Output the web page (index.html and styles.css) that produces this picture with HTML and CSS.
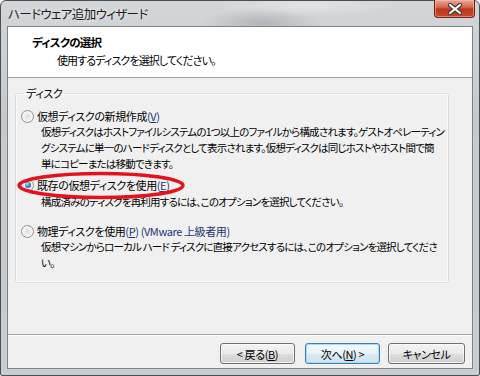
FILE: index.html
```html
<!DOCTYPE html>
<html lang="ja">
<head>
  <meta charset="UTF-8">
  <title>ハードウェア追加ウィザード</title>
  <link rel="stylesheet" href="styles.css">
</head>
<body>
  <div class="window">
    <div class="titlebar">
      <span class="title">ハードウェア追加ウィザード</span>
      <div class="close">
        <svg width="16" height="12" viewBox="0 0 16 12">
          <path d="M3 2 L13 10 M13 2 L3 10" stroke="#3a3a3a" stroke-width="4.2" stroke-linecap="round"/>
          <path d="M3 2 L13 10 M13 2 L3 10" stroke="#ffffff" stroke-width="2.2" stroke-linecap="round"/>
        </svg>
      </div>
    </div>

    <div class="client">
      <!-- ヘッダー -->
      <div class="header">
        <div class="head-title">ディスクの選択</div>
        <div class="head-sub">使用するディスクを選択してください。</div>
      </div>

      <div class="body">
        <fieldset class="group">
          <legend>ディスク</legend>

          <div class="option">
            <span class="radio"></span>
            <span>仮想ディスクの新規作成<span class="key">(<u>V</u>)</span></span>
          </div>
          <div class="desc">仮想ディスクはホストファイルシステムの1つ以上のファイルから構成されます。ゲストオペレーティン<br>グシステムに単一のハードディスクとして表示されます。仮想ディスクは同じホストやホスト間で簡<br>単にコピーまたは移動できます。</div>

          <div class="option second">
            <span class="radio checked"></span>
            <span>既存の仮想ディスクを使用<span class="key">(<u>E</u>)</span></span>
          </div>
          <div class="desc">構成済みのディスクを再利用するには、このオプションを選択してください。</div>

          <div class="option third">
            <span class="radio"></span>
            <span>物理ディスクを使用<span class="key">(<u>P</u>) (VMware 上級者用)</span></span>
          </div>
          <div class="desc">仮想マシンからローカル ハード ディスクに直接アクセスするには、このオプションを選択してくださ<br>い。</div>
        </fieldset>

        <svg class="mark" width="172" height="32" viewBox="0 0 172 32">
          <ellipse cx="86" cy="15.5" rx="82" ry="12" fill="none" stroke="#e3121c" stroke-width="3.4"/>
        </svg>
      </div>

      <div class="footer">
        <button class="btn">&lt; 戻る(<u>B</u>)</button>
        <button class="btn default">次へ(<u>N</u>) &gt;</button>
        <button class="btn cancel">キャンセル</button>
      </div>
    </div>
  </div>
</body>
</html>
```

FILE: styles.css
```css
body {
  margin: 0;
  background: #ffffff;
  font-family: "Noto Sans CJK JP", "Noto Sans", sans-serif;
  font-feature-settings: "palt";
  font-size: 11px;
  letter-spacing: -0.4px;
  color: #000;
}
.window {
  width: 480px;
  height: 376px;
  box-sizing: border-box;
  border: 1px solid #4a4f55;
  border-radius: 6px 6px 2px 2px;
  padding: 0 6px 6px;
  background: linear-gradient(180deg, #d3d6d9 0%, #c6cacd 30%, #c9cdd0 100%);
  display: flex;
  flex-direction: column;
}
.titlebar {
  height: 25px;
  display: flex;
  align-items: flex-start;
  background: radial-gradient(ellipse 60px 14px at 255px 22px, rgba(120,125,130,0.35), transparent),
              radial-gradient(ellipse 90px 12px at 300px 4px, rgba(235,238,240,0.6), transparent);
}
.title {
  font-size: 12.5px;
  letter-spacing: -0.6px;
  color: #1c1c1c;
  padding: 3px 0 0 1px;
  text-shadow: 0 0 6px rgba(255,255,255,0.8);
}
.close {
  margin-left: auto;
  margin-right: -2px;
  margin-top: -1px;
  width: 41px;
  height: 18px;
  box-sizing: border-box;
  border: 1px solid #6b2418;
  border-top: none;
  border-radius: 0 0 4px 4px;
  background: linear-gradient(180deg, #e7a796 0%, #d66c55 40%, #c2351d 55%, #c84a2c 100%);
  box-shadow: inset 0 0 0 1px rgba(255,200,190,0.5);
  display: flex;
  align-items: center;
  justify-content: center;
}
.client {
  flex: 1;
  border: 1px solid #7b8288;
  background: #f0f0f0;
  display: flex;
  flex-direction: column;
}
.header {
  height: 51px;
  background: #fff;
  border-bottom: 1px solid #a0a0a0;
  box-sizing: border-box;
  padding: 7px 0 0 24px;
}
.head-title {
  font-weight: bold;
  font-size: 11.5px;
  line-height: 16px;
  letter-spacing: -0.8px;
}
.head-sub {
  margin: 2px 0 0 25px;
  line-height: 16px;
  letter-spacing: -0.9px;
}
.body {
  flex: 1;
  position: relative;
  padding: 7px 23px 0 7px;
}
.group {
  margin: 0;
  min-width: 0;
  border: 1px solid #d5dfe5;
  border-radius: 3px;
  box-shadow: inset 0 0 0 1px #fbfbfb;
  padding: 7px 4px 11px 5px;
  line-height: 16px;
  white-space: nowrap;
}
.group legend {
  margin-left: 3px;
  padding: 0 2px;
  line-height: 16px;
}
.option {
  display: flex;
  align-items: center;
  gap: 3px;
  height: 16px;
}
.option.second {
  margin-top: 5px;
}
.option.third {
  margin-top: 13px;
}
.key {
  color: #1f3573;
}
.desc {
  margin: 0 0 0 20px;
  font-size: 10.5px;
  letter-spacing: -0.8px;
}
.option.second + .desc {
  margin-top: 1px;
}
.radio {
  width: 13px;
  height: 13px;
  box-sizing: border-box;
  border-radius: 50%;
  border: 1px solid #8c8f91;
  background: radial-gradient(circle at 50% 50%, #d9dcdd 0, #eceeef 3px, #f9f9f9 6px);
  position: relative;
  flex: none;
}
.radio.checked::after {
  content: "";
  position: absolute;
  left: 2.5px;
  top: 2.5px;
  width: 6px;
  height: 6px;
  border-radius: 50%;
  background: radial-gradient(circle at 35% 30%, #b9e2fb 0, #3c8ed6 45%, #1b4f97 100%);
}
.mark {
  position: absolute;
  left: 7px;
  top: 92px;
}
.footer {
  height: 34px;
  box-sizing: border-box;
  border-top: 1px solid #a0a0a0;
  box-shadow: inset 0 1px 0 #ffffff;
  padding: 8px 7px 0 0;
  display: flex;
  justify-content: flex-end;
  align-items: flex-start;
  gap: 10px;
}
.btn {
  width: 75px;
  height: 21px;
  padding: 0;
  font: inherit;
  letter-spacing: inherit;
  color: #000;
  border: 1px solid #707070;
  border-radius: 3px;
  background: linear-gradient(180deg, #f2f2f2 0%, #ebebeb 50%, #dddddd 51%, #cfcfcf 100%);
  box-shadow: inset 0 0 0 1px rgba(255,255,255,0.7);
}
.btn.default {
  border-color: #3c7fb1;
  background: linear-gradient(180deg, #f4f9fc 0%, #e9f3f9 50%, #dbeaf3 51%, #cfe2ee 100%);
  box-shadow: inset 0 0 0 1px #a8dcf5;
  margin-right: -2px;
}
.btn.cancel {
  width: 77px;
}
```
